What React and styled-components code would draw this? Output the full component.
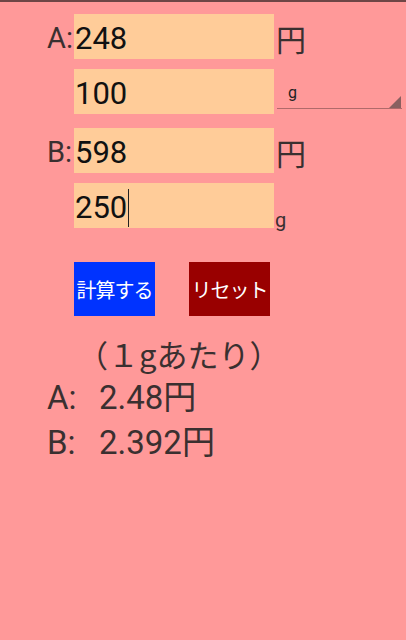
import styled, { createGlobalStyle } from "styled-components";

const GlobalStyle = createGlobalStyle`
    html, body {
        margin: 0;
        padding: 0;
        background: #ff9999;
    }
`

const Screen = styled.div`
    width: 406px;
    height: 640px;
    box-sizing: border-box;
    background: #ff9999;
    border-top: 2px solid #6e4646;
    font-family: Roboto, "Noto Sans CJK JP", sans-serif;
    color: #3a3030;
    padding: 10px 0 0 47px;
    display: flex;
    flex-direction: column;
`

const Form = styled.div`
    display: flex;
    flex-direction: column;
    gap: 12px;
`

const Row = styled.div`
    display: grid;
    grid-template-columns: 27px 200px auto;
    height: 45px;
    align-items: center;
`

const Label = styled.span`
    font-size: 29px;
    line-height: 1;
    padding-top: 4px;
`

const Field = styled.div`
    height: 45px;
    background: #ffcc99;
    color: #111;
    font-size: 31px;
    display: flex;
    align-items: center;
    padding: 4px 0 0 1px;
    box-sizing: border-box;
`

const Caret = styled.span`
    width: 1px;
    height: 38px;
    margin-left: 1px;
    background: #222;
`

const Yen = styled.span`
    font-size: 30px;
    padding: 4px 0 0 2px;
    font-family: "Noto Sans CJK JP", sans-serif;
`

const Spinner = styled.div`
    position: relative;
    align-self: stretch;
    margin-left: 3px;
    width: 125px;
    height: 40px;
    border-bottom: 1px solid #b06a6a;
    display: flex;
    align-items: center;
    padding-left: 11px;
    font-size: 16px;
    color: #222;
    box-sizing: border-box;
    padding-top: 8px;
`

const Corner = styled.span`
    position: absolute;
    right: 1px;
    bottom: 0;
    width: 0;
    height: 0;
    border-left: 12px solid transparent;
    border-bottom: 12px solid #8a6060;
`

const SmallUnit = styled.span`
    align-self: end;
    font-size: 20px;
    line-height: 1;
    color: #3a3030;
    margin-bottom: -2px;
    padding-left: 1px;
`

const Buttons = styled.div`
    display: flex;
    gap: 34px;
    margin: 34px 0 0 27px;
`

const Button = styled.button`
    width: 81px;
    height: 54px;
    border: none;
    padding: 0;
    background: ${props => props.color};
    color: white;
    font-family: "Noto Sans CJK JP", sans-serif;
    font-size: 20px;
    letter-spacing: -1px;
    white-space: nowrap;
`

const Caption = styled.div`
    font-family: "Noto Sans CJK JP", sans-serif;
    font-size: 31px;
    margin: 17px 0 0 30px;
    line-height: 42px;
`

const Result = styled.div`
    display: flex;
    font-size: 33px;
    line-height: 45px;
    font-family: Roboto, "Noto Sans CJK JP", sans-serif;
`

const ResultLabel = styled.span`
    width: 52px;
`

const App = () => {
    return (
        <Screen>
            <GlobalStyle />
            <Form>
                <Row>
                    <Label>A:</Label>
                    <Field>248</Field>
                    <Yen>円</Yen>
                </Row>
                <Row>
                    <span />
                    <Field>100</Field>
                    <Spinner>g<Corner /></Spinner>
                </Row>
                <Row>
                    <Label>B:</Label>
                    <Field>598</Field>
                    <Yen>円</Yen>
                </Row>
                <Row>
                    <span />
                    <Field>250<Caret /></Field>
                    <SmallUnit>g</SmallUnit>
                </Row>
            </Form>
            <Buttons>
                <Button color="#0033ff">計算する</Button>
                <Button color="#990000">リセット</Button>
            </Buttons>
            <Caption>（１gあたり）</Caption>
            <Result><ResultLabel>A:</ResultLabel>2.48円</Result>
            <Result><ResultLabel>B:</ResultLabel>2.392円</Result>
        </Screen>
    )
}

export default App
